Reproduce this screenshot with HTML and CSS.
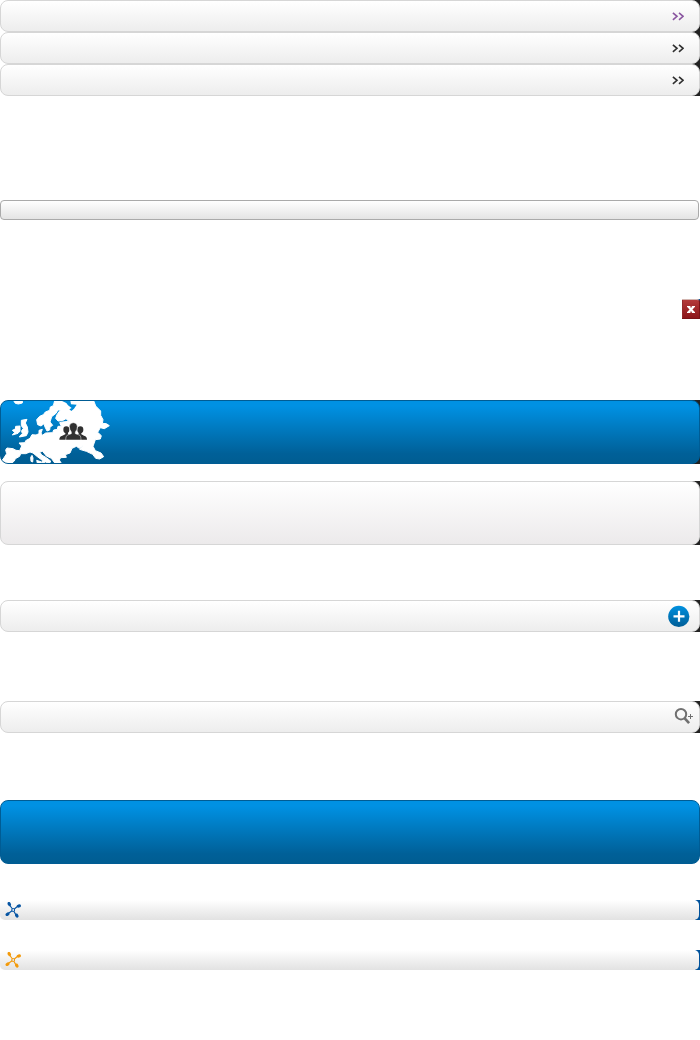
FILE: index.html
```html
<!DOCTYPE html>
<html lang="en">
<head>
<meta charset="utf-8">
<title>Buttons</title>
<link rel="stylesheet" href="styles.css">
</head>
<body>
<svg class="defs" width="0" height="0">
  <defs>
    <symbol id="chevrons" viewBox="0 0 12 9"><path d="M.9.8 5 4.3.9 7.8M7 .8 11.1 4.3 7 7.8" fill="none" stroke="currentColor" stroke-width="1.6"/></symbol>
    <symbol id="network" viewBox="0 0 16 16">
      <path d="M4.5 3 8.2 8 13 4M8.2 8 2.5 12M8.2 8 11.5 14" fill="none" stroke="currentColor" stroke-width="1.2"/>
      <g fill="currentColor"><ellipse cx="4.3" cy="2.1" rx="1.6" ry="2.2" transform="rotate(-25 4.3 2.1)"/><ellipse cx="13.8" cy="4" rx="2.2" ry="1.6" transform="rotate(-15 13.8 4)"/><ellipse cx="2.5" cy="12.2" rx="2.1" ry="1.6" transform="rotate(-35 2.5 12.2)"/><ellipse cx="11.8" cy="13.6" rx="1.6" ry="2.2" transform="rotate(-25 11.8 13.6)"/></g>
      <circle cx="8.2" cy="8" r="1.5" fill="#dce8f4" stroke="currentColor"/>
    </symbol>
    <linearGradient id="disc" x2="0" y2="1"><stop stop-color="#0090df"/><stop offset="1" stop-color="#005d96"/></linearGradient>
  </defs>
</svg>
<main class="sheet">
  <div class="backing"><div class="bar row visited"><svg class="chevrons"><use href="#chevrons"/></svg></div></div>
  <div class="backing"><div class="bar row"><svg class="chevrons"><use href="#chevrons"/></svg></div></div>
  <div class="backing"><div class="bar row"><svg class="chevrons"><use href="#chevrons"/></svg></div></div>
  <div class="field"></div>
  <div class="closer-backing"><div class="closer">
    <svg width="18" height="20" viewBox="0 0 18 20"><path d="m6.5 7.8 5 5.4M11.5 7.8l-5 5.4" stroke="#fff" stroke-width="2.2"/><path d="M5 7h3.4v1.3H5zM9.8 7H13v1.3H9.8zM5 12.7h3.4V14H5zM9.8 12.7H13V14H9.8z" fill="#fff"/></svg>
  </div></div>
  <div class="backing map-row"><div class="blue">
    <svg class="map" viewBox="0 15 360 192">
      <g fill="#fff" stroke="#fff" stroke-width="3">
        <path d="M164 17 160 32 151 36 149 46 136 51 130 59 119 64 110 74 113 89 123 93 132 86 135 96 141 108 149 105 150 96 158 91 150 81 155 65 169 54 173 45 181 45 171 59 167 70 174 78 187 77 198 71 206 79 188 81 179 83 184 94 174 94 172 103 161 105 158 113 137 114 127 121 123 114 127 103 117 106 117 116 108 120 96 119 90 130 77 137 75 143 57 144 65 153 59 167 48 166 39 161 21 159 17 165 20 176 9 193 3 198 5 205 34 205 43 198 46 191 59 184 62 176 77 176 90 171 99 174 112 185 127 196 127 205 136 201 149 205 152 198 139 188 125 180 119 171 128 169 139 183 154 190 165 205 184 205 178 195 182 188 199 187 196 179 210 174 216 160 229 154 238 160 249 151 239 163 259 169 278 178 287 190 299 192 311 185 303 174 286 167 279 154 286 134 301 132 304 122 293 112 301 98 313 101 328 92 319 86 307 85 309 74 302 61 302 48 287 33 281 17Z"/>
        <path d="M41 17H67V24L55 27 46 25ZM64 76 81 73 76 84 82 96 84 111 79 122 58 126 63 119 68 116 64 109 70 100 64 92ZM47 94 60 93 60 108 54 115 37 120 44 112 37 106 46 102ZM92 187 96 181 99 189 98 201 93 199ZM110 196 125 201 121 206 112 204Z"/>
      </g>
      <path d="M184 17H211L213 28 230 29 222 41 214 48 208 43 215 39 204 31 199 24Z" fill="#008bd9"/>
      <g fill="#303030">
        <ellipse cx="199" cy="104" rx="9" ry="10"/><ellipse cx="241" cy="104" rx="9" ry="10"/>
        <path d="M178 134Q178 123 187 122L196 118V109H204V118L214 121 205 134ZM261 134Q261 123 252 122L244 118V109H236V118L225 121 234 134Z"/>
        <path d="M208 94Q209 83 220 83 231 83 232 94 232 105 226 111V116L240 121Q243 124 243 135H197Q197 124 201 121L214 116V111Q208 104 208 94Z" stroke="#fff" stroke-width="1.5"/>
      </g>
    </svg>
  </div></div>
  <div class="backing panel-row"><div class="bar panel"></div></div>
  <div class="backing add-row"><div class="bar row">
    <svg class="add" viewBox="0 0 22 22"><circle cx="10.8" cy="11.4" r="10.6" fill="url(#disc)"/><path d="M11 5.8v11M5.5 11.4h11" stroke="#fff" stroke-width="2.2"/></svg>
  </div></div>
  <div class="backing search-row"><div class="bar row">
    <svg class="search" viewBox="0 0 19 17"><g fill="none" stroke="#707070"><circle cx="7" cy="6.2" r="5.2" stroke-width="2"/><path d="m10.5 10.2 4.6 5" stroke-width="2.6"/><path d="M14 8.5h5M16.5 6v5"/></g></svg>
  </div></div>
  <div class="blue plain"></div>
  <div class="backing navy link-one"><div class="link"><svg><use href="#network"/></svg></div></div>
  <div class="backing navy link-two"><div class="link orange"><svg><use href="#network"/></svg></div></div>
</main>
</body>
</html>
```

FILE: styles.css
```css
* { box-sizing: border-box; }
body { margin: 0; background: #fff; font-family: "Liberation Sans", sans-serif; }
.defs { display: block; }
.sheet { display: flex; flex-direction: column; height: 1040px; overflow: hidden; }
.backing { flex: none; background: linear-gradient(#222, #222) right / 8px 100% no-repeat; }
.bar {
  border: 1px solid #d6d6d6;
  border-radius: 8px;
  background: linear-gradient(#fff, #ededed);
}
.row { height: 32px; display: flex; align-items: center; justify-content: flex-end; color: #303030; }
.visited { color: #8a56a0; }
.chevrons { width: 12px; height: 9px; margin-right: 15px; }
.field {
  flex: none;
  width: 699px;
  height: 20px;
  margin-top: 104px;
  border: 1px solid #aaa;
  border-radius: 4px;
  background: linear-gradient(#fff, #e4e4e4);
}
.closer-backing {
  flex: none;
  align-self: flex-end;
  margin-top: 79px;
  background: linear-gradient(#00529b, #00529b) top right / 4px 4px no-repeat;
}
.closer {
  width: 18px;
  height: 20px;
  border: solid #7b1216;
  border-width: 0 1px 1px 0;
  border-top: 1px solid #d3b5b0;
  border-top-right-radius: 3px;
  background: linear-gradient(#b43a3a, #8c1519);
  box-shadow: inset 1px 0 #932a2c;
}
.closer svg { display: block; margin-top: -1px; }
.map-row { margin-top: 81px; }
.blue {
  flex: none;
  height: 64px;
  border: 1px solid #005c94;
  border-radius: 8px;
  background: linear-gradient(#0091e3 8%, #006098 85%, #005d92);
  overflow: hidden;
}
.map { display: block; width: 120px; height: 64px; margin: -1px 0 0 -1px; }
.panel-row { margin-top: 17px; }
.panel { height: 64px; background: linear-gradient(#fff, #eceaeb); }
.add-row { margin-top: 55px; }
.add { width: 22px; height: 22px; margin-right: 9px; }
.search-row { margin-top: 69px; }
.search { width: 19px; height: 17px; margin: 0 6px 2px 0; }
.plain { margin-top: 67px; }
.navy { background-image: linear-gradient(#00529b, #00529b); background-size: 5px 100%; }
.link-one { margin-top: 36px; }
.link-two { margin-top: 30px; }
.link {
  width: 699px;
  height: 20px;
  padding: 2px 0 0 5px;
  border-radius: 5px;
  background: linear-gradient(#fff, #e2e2e2);
  color: #0755a3;
}
.orange { color: #f39a0b; }
.link svg { display: block; width: 16px; height: 16px; }
```
